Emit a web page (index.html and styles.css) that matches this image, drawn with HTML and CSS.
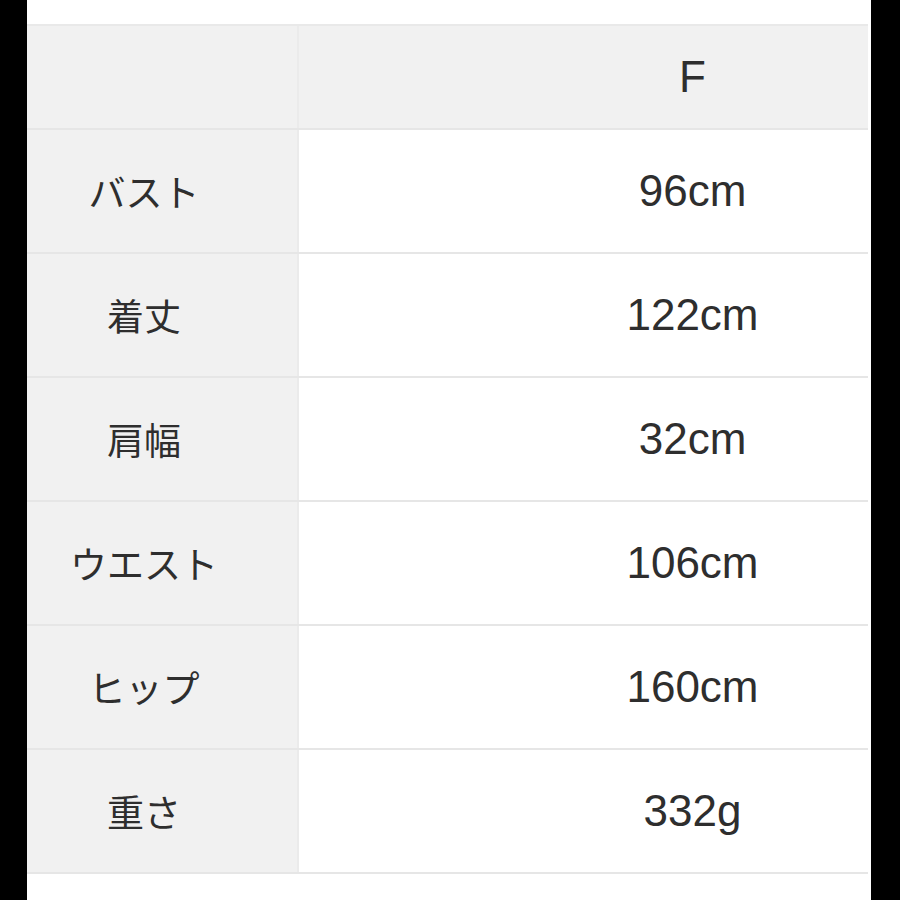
FILE: index.html
```html
<!DOCTYPE html>
<html lang="ja">
<head>
<meta charset="utf-8">
<link rel="stylesheet" href="styles.css">
</head>
<body>
<div class="page">
  <div class="table">
    <div class="row head">
      <div class="label"></div>
      <div class="value">F</div>
    </div>
    <div class="row">
      <div class="label">バスト</div>
      <div class="value">96cm</div>
    </div>
    <div class="row">
      <div class="label">着丈</div>
      <div class="value">122cm</div>
    </div>
    <div class="row">
      <div class="label">肩幅</div>
      <div class="value">32cm</div>
    </div>
    <div class="row">
      <div class="label">ウエスト</div>
      <div class="value">106cm</div>
    </div>
    <div class="row">
      <div class="label">ヒップ</div>
      <div class="value">160cm</div>
    </div>
    <div class="row">
      <div class="label">重さ</div>
      <div class="value">332g</div>
    </div>
  </div>
</div>
</body>
</html>
```

FILE: styles.css
```css
html, body {
  margin: 0;
  padding: 0;
  background: #000;
}
.page {
  margin-left: 27px;
  width: 844px;
  height: 900px;
  background: #fff;
  padding-top: 24px;
  box-sizing: border-box;
}
.table {
  width: 841px;
  border-top: 2px solid #e9e9e9;
}
.row {
  display: flex;
  height: 124px;
  border-bottom: 2px solid #e6e6e6;
  box-sizing: border-box;
  color: #2e2e2e;
}
.row.head {
  height: 104px;
  background: #f1f1f1;
}
.label {
  width: 272px;
  background: #f1f1f1;
  border-right: 2px solid #ebebeb;
  display: flex;
  align-items: center;
  justify-content: center;
  padding-right: 36px;
  box-sizing: border-box;
  font-family: "Noto Sans CJK JP", "Noto Sans", sans-serif;
  font-size: 37px;
}
.value {
  flex: 1;
  display: flex;
  align-items: center;
  justify-content: center;
  padding-left: 218px;
  box-sizing: border-box;
  font-family: "Liberation Sans", Arial, sans-serif;
  font-size: 44px;
}
```
